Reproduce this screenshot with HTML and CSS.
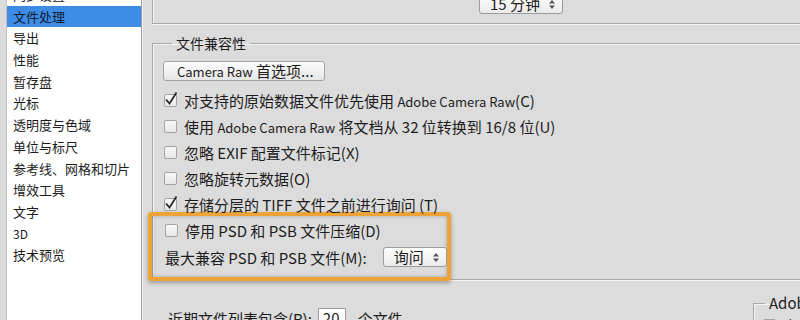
FILE: index.html
```html
<!DOCTYPE html>
<html lang="zh-CN">
<head>
  <meta charset="UTF-8">
  <meta name="viewport" content="width=device-width, initial-scale=1.0">
  <link rel="stylesheet" href="styles.css">
</head>
<body>

  <div class="dialog">
    <ul class="nav">
      <li>同步设置</li>
      <li class="active">文件处理</li>
      <li>导出</li>
      <li>性能</li>
      <li>暂存盘</li>
      <li>光标</li>
      <li>透明度与色域</li>
      <li>单位与标尺</li>
      <li>参考线、网格和切片</li>
      <li>增效工具</li>
      <li>文字</li>
      <li class="latin">3D</li>
      <li>技术预览</li>
    </ul>

    <div class="panel">
      <div class="save-group">
        <span class="select select-time">15 分钟
          <svg class="arrows" width="6" height="9" viewBox="0 0 6 9"><path d="M0 3.5 L3 0 L6 3.5 Z M0 5.5 L3 9 L6 5.5 Z"/></svg>
        </span>
      </div>

      <fieldset class="compat">
        <legend>文件兼容性</legend>
        <button class="btn"><span class="en">Camera Raw</span> 首选项...</button>

        <div class="option">
          <span class="check checked"><svg width="14" height="14" viewBox="0 0 14 14"><path d="M2 7.5 L5.5 11.5 L12.5 0.5"/></svg></span>
          <span>对支持的原始数据文件优先使用 <span class="en">Adobe Camera Raw</span>(C)</span>
        </div>
        <div class="option">
          <span class="check"></span>
          <span>使用 <span class="en">Adobe Camera Raw</span> 将文档从 32 位转换到 16/8 位(U)</span>
        </div>
        <div class="option">
          <span class="check"></span>
          忽略 EXIF 配置文件标记(X)
        </div>
        <div class="option">
          <span class="check"></span>
          忽略旋转元数据(O)
        </div>
        <div class="option">
          <span class="check checked"><svg width="14" height="14" viewBox="0 0 14 14"><path d="M2 7.5 L5.5 11.5 L12.5 0.5"/></svg></span>
          存储分层的 TIFF 文件之前进行询问 (T)
        </div>

        <div class="highlight">
          <div class="option">
            <span class="check"></span>
            停用 PSD 和 PSB 文件压缩(D)
          </div>
          <div class="option option-select">
            最大兼容 PSD 和 PSB 文件(M):
            <span class="select select-ask">询问
              <svg class="arrows" width="6" height="9" viewBox="0 0 6 9"><path d="M0 3.5 L3 0 L6 3.5 Z M0 5.5 L3 9 L6 5.5 Z"/></svg>
            </span>
          </div>
        </div>
      </fieldset>

      <div class="bottom">
        <div class="recent">
          近期文件列表包含(R):
          <span class="field">20</span>
          个文件
        </div>
        <fieldset class="drive">
          <legend>Adobe Drive</legend>
          <div class="option">
            <span class="check"></span>
            启用 Adobe Drive
          </div>
        </fieldset>
      </div>
    </div>
  </div>

</body>
</html>
```

FILE: styles.css
```css
body {
  margin: 0;
  background-color: #dcdcdc;
  font-family: "Noto Sans CJK SC", sans-serif;
  color: #1c1c1c;
}

.dialog {
  display: flex;
  width: 800px;
  height: 320px;
  overflow: hidden;
}

/* left category list */
.nav {
  list-style: none;
  margin: -16px 0 0 6px;
  padding: 0;
  width: 134px;
  flex: none;
  background-color: #fff;
  border-left: 1px solid #c2c2c2;
  border-right: 1px solid #9e9e9e;
  font-size: 13px;
}

.nav li {
  height: 21.7px;
  line-height: 21.7px;
  padding-left: 6px;
  white-space: nowrap;
}

.nav li.active {
  background-color: #3d8de6;
  color: #0d1c33;
}

.nav li.latin {
  font-size: 12px;
}

/* right settings panel */
.panel {
  flex: 1;
  min-width: 0;
  overflow: hidden;
  font-size: 15px;
  border-left: 1px solid #f2f2f2;
}

.en {
  font-size: 13px;
}

.save-group {
  display: flex;
  align-items: flex-end;
  box-sizing: border-box;
  width: 760px;
  height: 24px;
  margin-left: 9px;
  padding: 0 0 9px 326px;
  border-left: 1px solid #a9a9a9;
  border-bottom: 1px solid #a9a9a9;
  box-shadow: 0 1px 0 #f4f4f4, inset 1px 0 0 #f4f4f4;
}

.select {
  display: inline-flex;
  align-items: center;
  justify-content: space-between;
  box-sizing: border-box;
  height: 20px;
  padding: 0 7px 0 10px;
  background: linear-gradient(#ffffff, #eaeaea);
  border: 1px solid #9c9c9c;
  border-radius: 3px;
  font-size: 15px;
  line-height: 18px;
  white-space: nowrap;
}

.select-time {
  width: 84px;
}

.select-ask {
  width: 66px;
  margin-left: 16px;
}

.arrows {
  fill: #555;
}

fieldset {
  margin: 0;
  border: 1px solid #a9a9a9;
  box-shadow: 1px 1px 0 #f4f4f4 inset, 1px 1px 0 #f4f4f4;
}

legend {
  font-size: 14px;
  line-height: 18px;
  padding: 0 4px;
}

.compat {
  width: 760px;
  box-sizing: border-box;
  margin: 10px 0 0 9px;
  padding: 9px 0 0 10px;
}

.compat legend {
  margin-left: 9px;
}

.btn {
  display: block;
  box-sizing: border-box;
  width: 162px;
  height: 20px;
  margin: 0 0 6px 0;
  padding: 0 0 0 13px;
  text-align: left;
  white-space: nowrap;
  font-family: inherit;
  font-size: 15px;
  line-height: 18px;
  color: #1c1c1c;
  background: linear-gradient(#fdfdfd, #e6e6e6);
  border: 1px solid #a2a2a2;
  border-radius: 3px;
}

.option {
  display: flex;
  align-items: center;
  height: 26px;
  white-space: nowrap;
}

.check {
  position: relative;
  flex: none;
  box-sizing: border-box;
  width: 13px;
  height: 13px;
  margin: 0 7px 0 1px;
  background: linear-gradient(#f8f8f8, #e8e8e8);
  border: 1px solid #a4a4a4;
  border-radius: 2px;
}

.check svg {
  position: absolute;
  left: -1px;
  top: -3px;
  fill: none;
  stroke: #2a2a2a;
  stroke-width: 1.8;
}

.highlight {
  box-sizing: border-box;
  width: 303px;
  margin: -5px 0 -2px -15px;
  padding: 1px 0 6px 12px;
  border: 4px solid #eea336;
  border-radius: 3px;
  box-shadow: 0 2px 4px rgba(0, 0, 0, 0.3), inset 0 0 4px rgba(0, 0, 0, 0.25);
}

.option-select {
  height: 28px;
  padding-left: 1px;
}

.bottom {
  display: flex;
  align-items: flex-start;
}

.recent {
  flex: none;
  display: flex;
  align-items: center;
  width: 585px;
  height: 20px;
  margin: 28px 0 0 25px;
  white-space: nowrap;
}

.field {
  box-sizing: border-box;
  width: 28px;
  height: 20px;
  margin: 0 12px 0 6px;
  padding-left: 4px;
  background-color: #fff;
  border: 1px solid #9c9c9c;
  line-height: 18px;
}

.drive {
  flex: none;
  width: 200px;
  margin-top: 14px;
  padding: 0 0 0 8px;
}

.drive legend {
  margin-left: 3px;
  font-size: 15px;
}
```
